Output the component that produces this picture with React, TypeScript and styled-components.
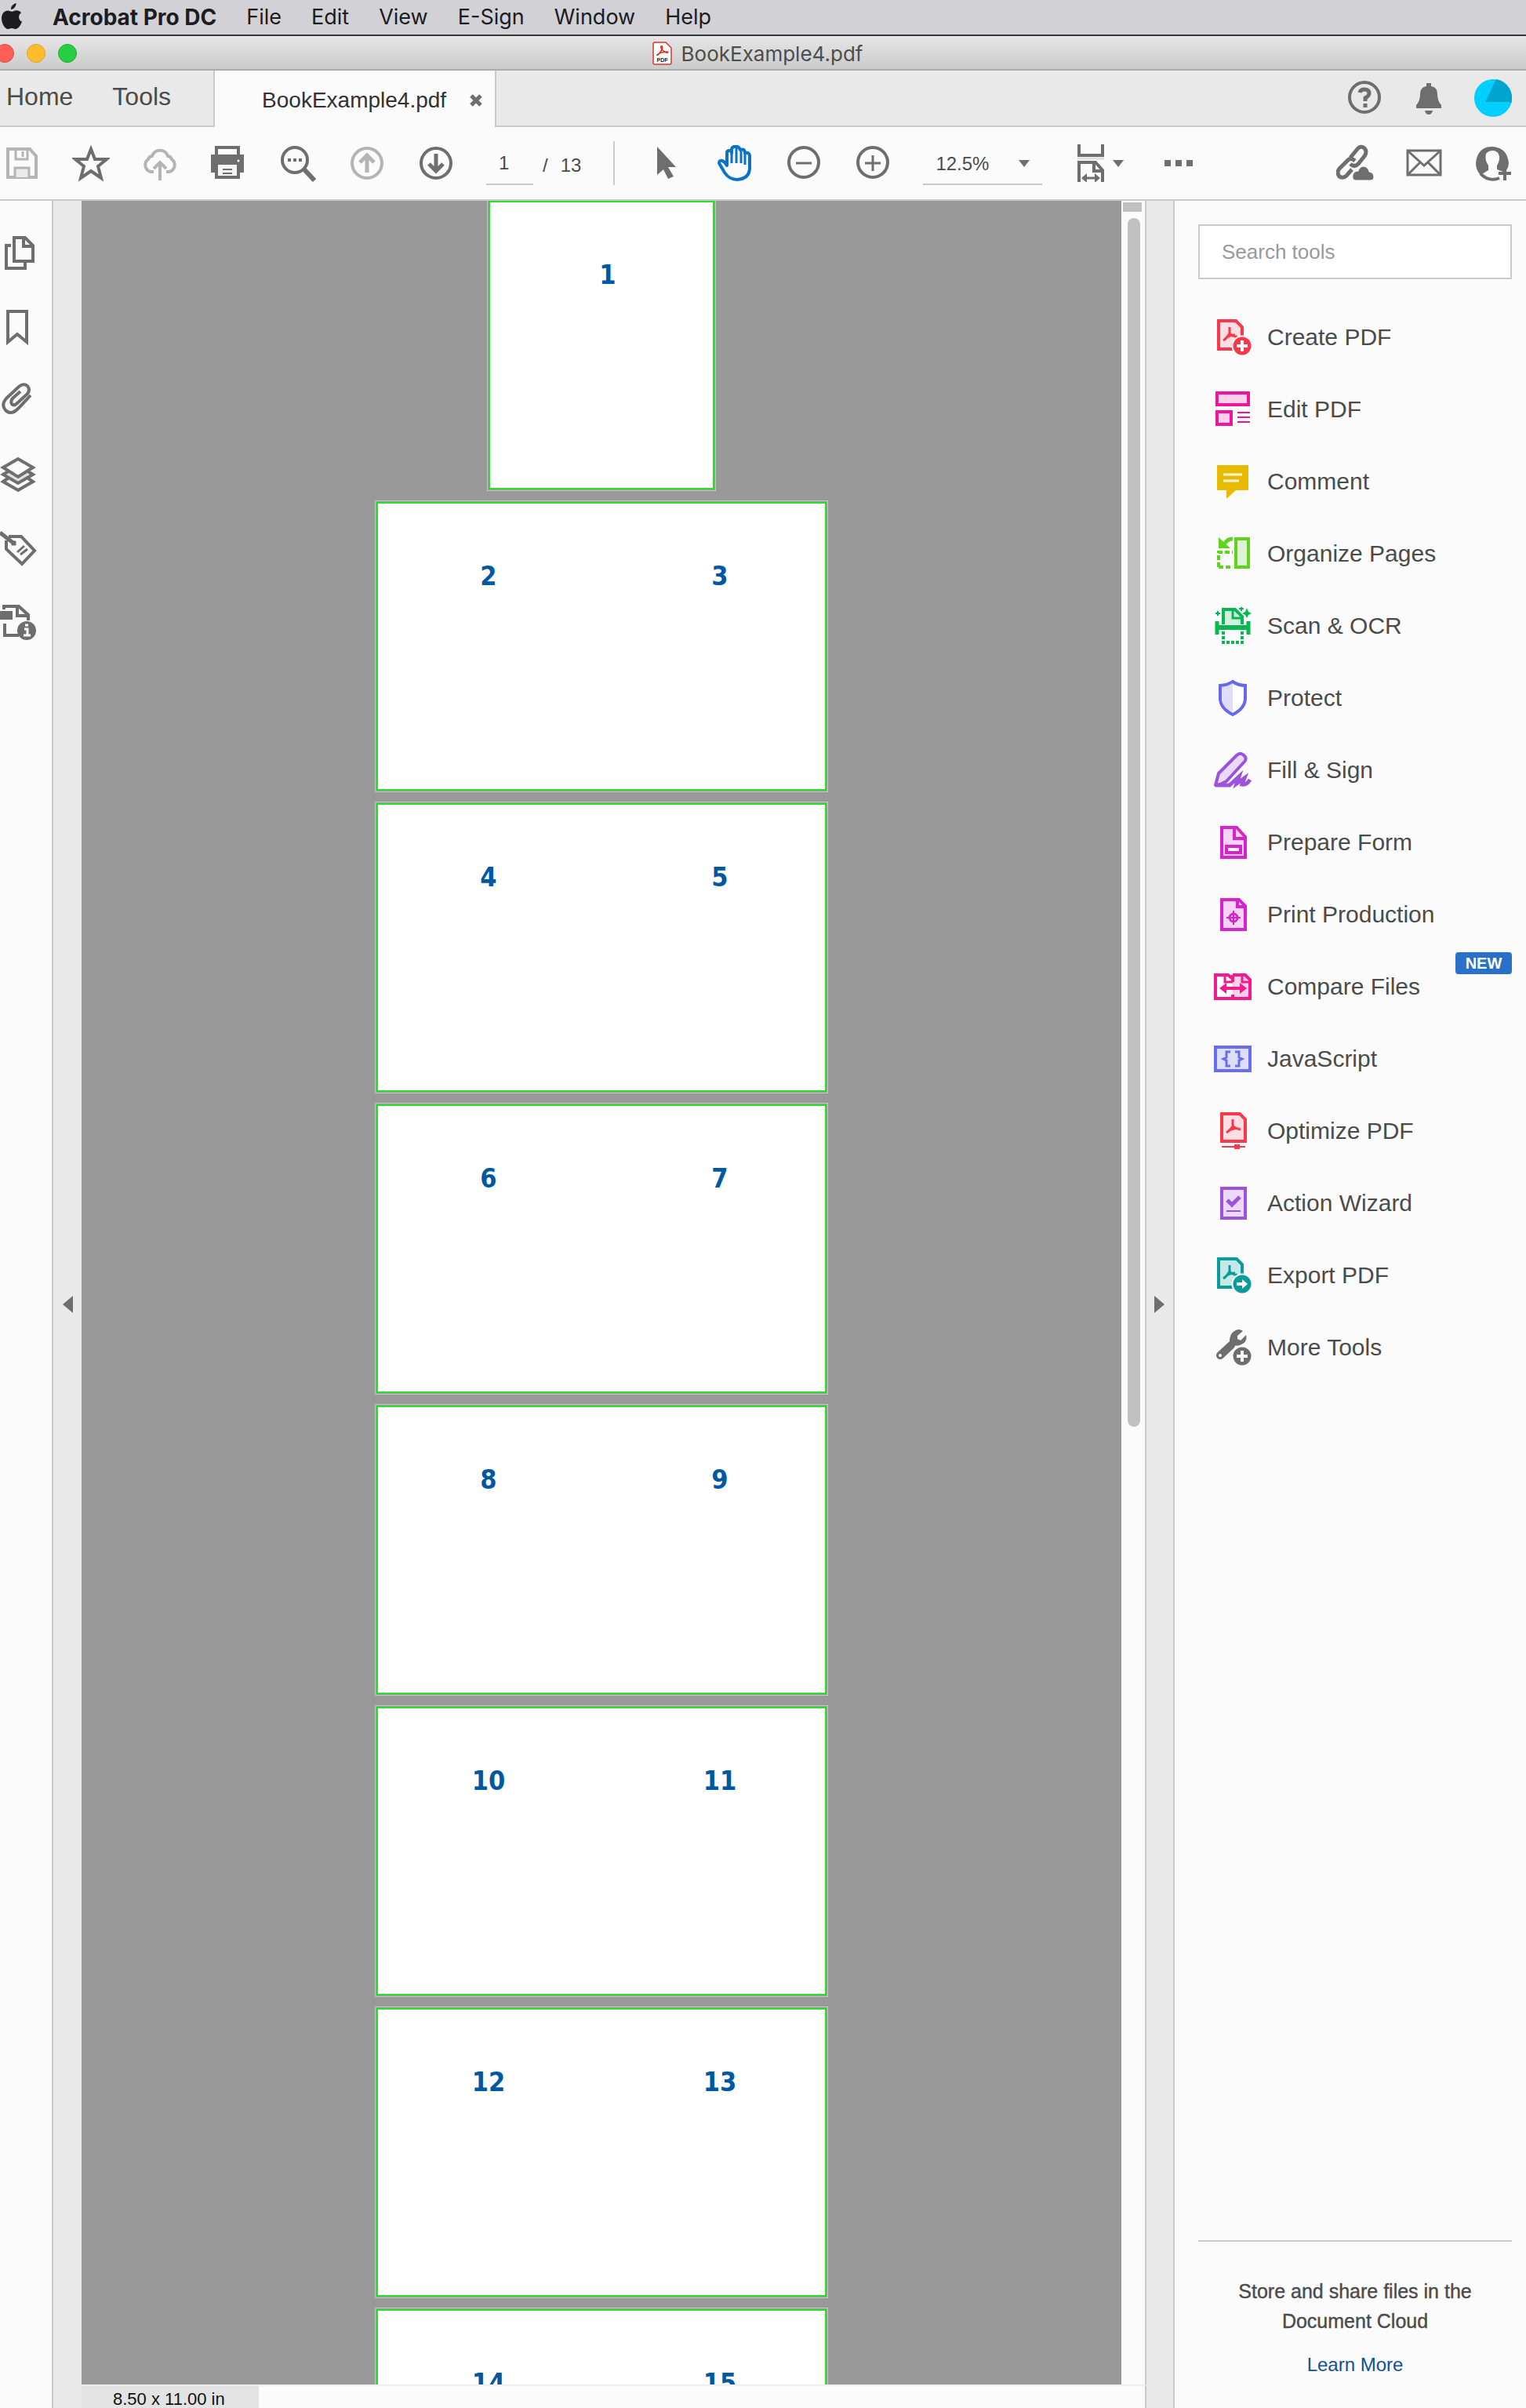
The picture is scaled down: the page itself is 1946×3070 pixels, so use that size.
import React from "react";
import styled, { createGlobalStyle } from "styled-components";

const ink = "#6e6e6e";
const pale = "#b4b4b4";
const line = "#cacaca";
const panel = "#fbfbfb";
const strip = "#e9e9e9";

const GlobalStyle = createGlobalStyle`
  * { box-sizing: border-box; }
  body { margin: 0; background: ${panel}; }
  button, input, select { font: inherit; color: inherit; border: 0; padding: 0; background: none; border-radius: 0; }
  svg { display: block; flex: none; }
`;

const Shell = styled.div`
  display: flex;
  flex-direction: column;
  height: 100vh;
  overflow: hidden;
  background: ${panel};
  color: #4b4b4b;
  font-family: "Liberation Sans", Arial, sans-serif;
`;

const MenuBar = styled.nav`
  display: flex;
  align-items: center;
  flex: none;
  height: 46px;
  gap: 38px;
  background: #d2d1d6;
  border-bottom: 2px solid #36363c;
  color: #1d1c21;
  font-family: Inter, Roboto, sans-serif;
`;

const MenuItem = styled.button<{ $bold?: boolean }>`
  font-size: ${(p) => (p.$bold ? 28 : 27)}px;
  line-height: 32px;
  font-weight: ${(p) => (p.$bold ? 700 : 400)};
  white-space: nowrap;
`;

const TitleBar = styled.header`
  position: relative;
  display: flex;
  align-items: center;
  justify-content: center;
  flex: none;
  height: 44px;
  gap: 12px;
  padding: 2px 14px 0 0;
  background: linear-gradient(#e6e6e6, #cbcbcb);
  border-bottom: 2px solid #acacac;
  color: #4d4d4d;
  font-family: Inter, Roboto, sans-serif;
  font-size: 26px;
`;

const Lights = styled.div`
  position: absolute;
  left: -6px;
  top: 10px;
  display: flex;
  gap: 16px;
`;

const Light = styled.button<{ $fill: string; $edge: string }>`
  width: 24px;
  height: 24px;
  border-radius: 50%;
  background: ${(p) => p.$fill};
  border: 1px solid ${(p) => p.$edge};
`;

const TabBar = styled.div`
  display: flex;
  flex: none;
  height: 72px;
  background: ${strip};
`;

const TabGroup = styled.div`
  display: flex;
  align-items: center;
  gap: 50px;
  padding: 0 54px 4px 8px;
  border-bottom: 2px solid ${line};
`;

const TabButton = styled.button`
  font-size: 32px;
  line-height: 40px;
`;

const ActiveTab = styled.div`
  display: flex;
  align-items: center;
  gap: 30px;
  padding: 6px 16px 2px 60px;
  background: ${panel};
  border: solid ${line};
  border-width: 0 2px;
  color: #323232;
  font-size: 28px;
`;

const TabActions = styled.div`
  display: flex;
  flex: 1;
  align-items: center;
  justify-content: flex-end;
  gap: 26px;
  padding-right: 14px;
  border-bottom: 2px solid ${line};
`;

const Toolbar = styled.div`
  display: flex;
  align-items: center;
  flex: none;
  height: 94px;
  padding-right: 14px;
  border-bottom: 2px solid ${line};
  font-size: 24px;
`;

const ToolGroup = styled.div<{ $end?: boolean }>`
  display: flex;
  align-items: center;
  gap: 32px;
  margin-left: ${(p) => (p.$end ? "auto" : "0")};
`;

const IconButton = styled.button`
  display: flex;
  align-items: center;
  justify-content: center;
  width: 56px;
  height: 56px;
`;

const PageInput = styled.input`
  width: 60px;
  height: 56px;
  margin: 0 12px 0 36px;
  padding: 2px 0 0 16px;
  border-bottom: 2px solid ${line};
`;

const PageTotal = styled.span`
  display: flex;
  gap: 16px;
  padding-top: 6px;
`;

const Divider = styled.span`
  width: 2px;
  height: 56px;
  margin: 0 38px 0 41px;
  background: ${line};
`;

const ZoomField = styled.div`
  position: relative;
  width: 152px;
  height: 56px;
  margin: 0 44px 0 35px;

  select {
    appearance: none;
    width: 100%;
    height: 100%;
    padding: 2px 0 0 16px;
    border-bottom: 2px solid ${line};
  }
  svg {
    position: absolute;
    right: 16px;
    top: 24px;
    pointer-events: none;
  }
`;

const FitButton = styled.button`
  display: flex;
  align-items: center;
  gap: 10px;
  height: 56px;
  margin-right: 42px;
`;

const Workspace = styled.div`
  display: flex;
  flex: 1;
  min-height: 0;
`;

const Rail = styled.nav`
  display: flex;
  flex-direction: column;
  flex: none;
  width: 68px;
  padding-top: 20px;
  border-right: 2px solid ${line};
`;

const RailButton = styled.button`
  display: flex;
  align-items: center;
  width: 48px;
  height: 94px;
`;

const Handle = styled.button<{ $side: "left" | "right" }>`
  display: flex;
  align-items: center;
  justify-content: center;
  flex: none;
  width: 36px;
  background: ${strip};
  border-right: ${(p) => (p.$side === "left" ? 0 : 2)}px solid ${line};
`;

const Viewer = styled.main`
  display: flex;
  flex-direction: column;
  flex: 1;
  min-width: 0;
`;

const ViewerBody = styled.div`
  display: flex;
  flex: 1;
  min-height: 0;
`;

const Canvas = styled.div`
  flex: 1;
  min-width: 0;
  overflow: hidden;
  background: #999999;
`;

const SpreadList = styled.div`
  display: flex;
  flex-direction: column;
  align-items: center;
  gap: 12px;
  margin-top: -2px;
`;

const Spread = styled.section`
  display: flex;
  padding: 1px;
  border: 1px solid #c6c6c6;
`;

const Sheet = styled.div`
  display: flex;
  height: 368px;
  background: #ffffff;
  border: 2px solid #2ae02a;
`;

const Page = styled.div<{ $odd: boolean }>`
  width: ${(p) => (p.$odd ? 284 : 286)}px;
  padding: ${(p) => (p.$odd ? "72px 0 0 16px" : "72px 4px 0 0")};
  color: #0058a3;
  font: bold 34px/40px "DejaVu Sans Condensed", "DejaVu Sans", sans-serif;
  text-align: center;
`;

const ScrollTrack = styled.div`
  display: flex;
  flex-direction: column;
  flex: none;
  width: 32px;
  padding: 2px 4px 0 2px;
  background: ${panel};
  border-right: 2px solid ${line};
`;

const ScrollSplit = styled.div`
  flex: none;
  height: 12px;
  margin-bottom: 8px;
  background: #c1c1c1;
`;

const ScrollThumb = styled.div`
  flex: 1541;
  width: 16px;
  margin-left: 6px;
  border-radius: 8px;
  background: #c1c1c1;
`;

const ScrollRest = styled.div`
  flex: 1221;
`;

const StatusBar = styled.footer`
  display: flex;
  flex: none;
  height: 30px;
  border-top: 2px solid #eeeeee;
  border-right: 2px solid ${line};
`;

const PageSize = styled.output`
  width: 226px;
  padding-left: 40px;
  background: #e3e3e3;
  color: #111111;
  font-size: 22px;
  line-height: 34px;
`;

const ToolsPanel = styled.aside`
  display: flex;
  flex-direction: column;
  flex: none;
  width: 448px;
  padding: 30px 18px 0 30px;
`;

const Search = styled.input`
  height: 70px;
  margin-bottom: 28px;
  padding-left: 28px;
  background: #ffffff;
  border: 2px solid ${line};
  font-size: 26px;

  &::placeholder { color: #999999; opacity: 1; }
`;

const ToolItem = styled.button`
  position: relative;
  display: flex;
  align-items: center;
  gap: 20px;
  height: 92px;
  padding-left: 20px;
  font-size: 30px;
  text-align: left;
`;

const NewBadge = styled.span`
  position: absolute;
  right: 0;
  top: 2px;
  width: 72px;
  border-radius: 4px;
  background: #2870c8;
  color: #ffffff;
  font-size: 20px;
  font-weight: 700;
  line-height: 28px;
  text-align: center;
`;

const Promo = styled.div`
  margin-top: auto;
  padding: 44px 0 36px;
  border-top: 2px solid ${line};
  font-size: 24px;
  line-height: 38px;
  text-align: center;

  p { margin: 0 32px 18px; font-size: 25px; -webkit-text-stroke: 0.4px #4b4b4b; }
  a { color: #0d5299; text-decoration: none; }
`;

type IconProps = { color?: string; w?: number; children: React.ReactNode };

const Icon = ({ color = ink, w = 4, children }: IconProps) => (
  <svg width="48" height="48" viewBox="0 0 48 48" fill="none" stroke={color} strokeWidth={w} aria-hidden="true">
    {children}
  </svg>
);

const Caret = () => (
  <svg width="14" height="9" viewBox="0 0 14 9" aria-hidden="true">
    <path d="M0 0H14L7 9Z" fill={ink} />
  </svg>
);

const AppleLogo = () => (
  <svg width="29" height="36" viewBox="0 0 29 36" fill="#1d1c21" aria-hidden="true">
    <path d="M20.600 0C20.900 3.500 17.700 8 14 8C13.600 4.500 17 .7 20.600 0ZM27 12.200C23 14.800 23 21.400 28 23.600C26.500 28.500 23 33 20 33C18 33 17.200 31.900 15 31.900C12.700 31.900 11.700 33 10 33C6.500 33 2 26 2 19.500C2 13 6 9.500 10 9.500C12.200 9.500 13.800 10.800 15.200 10.800C16.600 10.800 18.500 9.300 21 9.300C23.500 9.300 25.600 10.300 27 12.200Z" />
  </svg>
);

const PdfBadge = () => (
  <svg width="25" height="30" viewBox="0 0 25 30" aria-hidden="true">
    <path d="M3 1H17L24 8V27Q24 29 22 29H3Q1 29 1 27V3Q1 1 3 1Z" fill="#fff" stroke="#d8392f" strokeWidth="1.500" />
    <path d="M11 6C14 5 13 11 8 16C4 20 5 14 18 13C22 13 19 16 14 12C11 9 10 7 11 6Z" fill="none" stroke="#e0291d" strokeWidth="1.600" />
    <text x="12.500" y="26" fontSize="7" fontWeight="700" fontFamily="Liberation Sans" textAnchor="middle" fill="#222">PDF</text>
  </svg>
);

const CloseIcon = () => (
  <svg width="16" height="16" viewBox="0 0 16 16" aria-hidden="true">
    <path d="M2 2L14 14M14 2L2 14" stroke={ink} strokeWidth="5" />
  </svg>
);

const SaveIcon = () => (
  <Icon color={pale}>
    <path d="M6 6H34L42 15V42H6Z" />
    <path d="M16 6V19H31V6M25 9V16" strokeWidth="3" />
    <path d="M15 42V30H33V42" fill="#ebebeb" strokeWidth="3" />
  </Icon>
);

const StarIcon = () => (
  <Icon>
    <path d="M24 6L29 19H44L33 28L37 43L24 34L11 43L15 28L4 19H19Z" />
  </Icon>
);

const CloudIcon = () => (
  <Icon color={pale}>
    <path d="M16 35H12A9 9 0 0 1 9 19A6 6 0 0 1 14 15A10.500 10.500 0 0 1 34 15A6 6 0 0 1 39 19A9 9 0 0 1 36 35H32" strokeWidth="4" />
    <path d="M24 46V24M16 31L24 23L32 31" strokeWidth="4" />
  </Icon>
);

const PrintIcon = () => (
  <Icon>
    <path d="M8 16V4H36V16" />
    <path d="M3 15H41V34H35V24H9V34H3Z" fill={ink} />
    <path d="M8 26V42H36V26" fill="#f4f4f4" />
    <path d="M16 32H28M16 37H28" strokeWidth="2" />
    <circle cx="36" cy="21" r="1.500" fill="#fff" stroke="none" />
  </Icon>
);

const FindIcon = () => (
  <Icon>
    <circle cx="20" cy="20" r="16" />
    <path d="M31 31L45 46" strokeWidth="6" />
    <path d="M11 20H15M18 20H22M25 20H29" />
  </Icon>
);

const ArrowCircle = ({ up }: { up?: boolean }) => (
  <Icon color={up ? pale : ink}>
    <circle cx="24" cy="24" r="19" />
    {up ? <path d="M24 36V14M15 23L24 14L33 23" strokeWidth="5" /> : <path d="M24 12V34M15 25L24 34L33 25" strokeWidth="5" />}
  </Icon>
);

const PointerIcon = () => (
  <Icon>
    <path d="M12 3L36 29H26L33 41L26 44L20 32L12 39Z" fill={ink} stroke="none" />
  </Icon>
);

const HandIcon = () => (
  <Icon color="#0a73c8">
    <path d="M13 27V11Q13 8 16 8T19 11V7Q19 4 22 3H26Q29 4 30 7Q36 5 36 11Q42 10 42 15V31Q41 44 26 45Q16 45 10 36L3 24Q3 20 7 21Q10 22 13 27Z" strokeLinejoin="round" />
    <path d="M19 10V24M25 5V24M31 8V24M36 11V26" strokeWidth="3" />
  </Icon>
);

const ZoomCircle = ({ plus }: { plus?: boolean }) => (
  <Icon>
    <circle cx="23" cy="23" r="19" />
    <path d={plus ? "M13 24H33M23 14V34" : "M13 24H33"} strokeWidth="3" />
  </Icon>
);

const FitIcon = () => (
  <svg width="36" height="48" viewBox="0 0 36 48" fill="none" stroke={ink} strokeWidth="4" aria-hidden="true">
    <path d="M3 0V14H33V0" />
    <path d="M1 18H35" stroke="#e0e0e0" strokeWidth="3" />
    <path d="M3 48V23H24L33 33V48M22 23V34H33" />
    <path d="M9 43H27" strokeWidth="3" />
    <path d="M13 37L6 43L13 49ZM23 37L30 43L23 49Z" fill={ink} stroke="none" />
  </svg>
);

const DotsIcon = () => (
  <Icon>
    <path d="M6 24H14M20 24H28M34 24H42" strokeWidth="8" />
  </Icon>
);

const HelpIcon = () => (
  <Icon>
    <circle cx="24" cy="23" r="19" />
    <path d="M18 17Q19 13 24 13Q30 13 30 18Q30 21 25 24V28M25 31V36" strokeWidth="5" />
  </Icon>
);

const BellIcon = () => (
  <Icon>
    <path d="M21 5H27V9Q35 10 35 19Q35 28 40 33V37H8V33Q13 28 13 19Q13 10 21 9ZM19 40H29Q28 45 24 45T19 40Z" fill={ink} stroke="none" />
  </Icon>
);

const Avatar = () => (
  <Icon>
    <circle cx="24" cy="24" r="24" fill="#00cfff" stroke="none" />
    <path d="M28 0A24 24 0 0 1 47 31L45 29H14Z" fill="#00a5cf" stroke="none" />
  </Icon>
);

const LinkIcon = () => (
  <Icon w={5}>
    <path d="M18 17L27 6Q31 1 36 5Q40 9 36 15L28 25Q23 30 18 25" />
    <path d="M24 21Q18 16 14 21L4 31Q0 36 4 41Q9 44 13 40L20 32" />
    <path d="M24 46Q20 45 21 39Q23 34 28 34Q30 28 35 28Q41 29 42 35Q48 36 48 42Q48 46 44 46Z" fill={ink} stroke={panel} strokeWidth="1" />
  </Icon>
);

const MailIcon = () => (
  <Icon w={3}>
    <path d="M3 8H45V39H3Z" />
    <path d="M4 9L24 27L44 9M4 38L19 23M44 38L29 23" />
  </Icon>
);

const PersonIcon = () => (
  <Icon>
    <path d="M32 43A20 20 0 0 1 8 37" />
    <path d="M8 39Q2 33 2 24Q4 3 23 3Q42 4 44 24Q44 29 41 33L37 35L29 32V27Q34 19 31 12Q28 8 24 8Q18 8 15 12Q13 20 18 27V33Z" fill={ink} stroke="none" />
    <path d="M31 37H47M39 29V46" />
  </Icon>
);

const railIcons: [string, React.ReactNode][] = [
  ["Page thumbnails", <Icon><path d="M14 14H8V43H32V36" /><path d="M18 4H32L42 14V34H18Z" fill={panel} /><path d="M30 4V15H42" /></Icon>],
  ["Bookmarks", <Icon><path d="M10 4H34V43L22 33L10 43Z" /></Icon>],
  ["Attachments", <Icon><path d="M39 17L23 34Q14 43 7 36Q1 29 8 21L24 6Q30 1 35 5Q39 10 35 15L22 27Q18 31 15 28Q13 24 17 20L26 12" /></Icon>],
  ["Layers", <Icon><path d="M4 33L23 20L42 33L23 44Z" fill={panel} /><path d="M4 24L23 12L42 24L23 35Z" fill="#e0e0e0" /><path d="M4 15L23 4L42 15L23 27Z" fill={panel} /></Icon>],
  ["Tags", <Icon><path d="M11 9H27L44 27L28 44L8 25V14" /><path d="M0 4L18 18" strokeWidth="5" /><path d="M15 15H20V20H15Z" fill={ink} strokeWidth="1" /><path d="M22 29L31 21M26 32L35 25" strokeWidth="3" /></Icon>],
  ["Document info", <Icon><path d="M5 8V4H24L36 15V22M22 4V16H34" /><path d="M0 10H16V21H0Z" fill={ink} stroke="none" /><path d="M6 26V41H24" /><circle cx="34" cy="35" r="12" fill={ink} stroke="none" /><path d="M31 33H35V41M30 41H39M32 28H36" stroke="#fff" strokeWidth="3" /></Icon>],
];

const acro = "M20 11V19Q17 25 12 28M20 19Q25 24 30 23M16 24Q21 21 27 21";

const tools: [string, React.ReactNode][] = [
  ["Create PDF", <Icon color="#f9384b"><path d="M6 3H28L36 11V39H6Z" fill="#fddfe3" /><path d={acro} strokeWidth="3" /><circle cx="36" cy="35" r="12.500" fill="#f9384b" stroke={panel} strokeWidth="2" /><path d="M29 35H43M36 28V42" stroke="#fff" /></Icon>],
  ["Edit PDF", <Icon color="#f0149a"><path d="M4 3H44V18H4ZM4 27H22V43H4Z" fill="#fcd0ea" /><path d="M30 28H46M30 34H46M30 40H46" strokeWidth="2" /></Icon>],
  ["Comment", <Icon><path d="M5 3H43Q44 3 44 4V34Q44 35 43 35H28L16 46V35H5Q4 35 4 34V4Q4 3 5 3Z" fill="#e8bb00" stroke="none" /><path d="M12 15H36M12 23H32" stroke="#fdf6d8" strokeWidth="3" /></Icon>],
  ["Organize Pages", <Icon color="#5fd41d"><path d="M28 5H44V41H28Z" fill="#e0f3d6" /><path d="M6 41V22H24M6 41H24" strokeDasharray="6 3" /><path d="M24 5Q17 5 14 11" strokeWidth="5" /><path d="M6 3V17H21Z" fill="#5fd41d" stroke="none" /></Icon>],
  ["Scan & OCR", <Icon color="#05b84f"><path d="M12 22V3H27L36 12V22" fill="#d3f0de" /><path d="M24 3V14H36" strokeWidth="3" /><path d="M4 18V35M44 18V35" strokeWidth="5" /><path d="M2 26H46" strokeWidth="6" /><path d="M12 31V45H36V31" strokeDasharray="4 2" /><path d="M5 5V11M2 8H8M35 0V5M32 2H38" strokeWidth="2" /><path d="M42 1L44 6L48 8L44 10L42 14L40 10L36 8L40 6Z" fill="#05b84f" stroke="none" /></Icon>],
  ["Protect", <Icon color="#6767f0"><path d="M24 3Q31 8 40 8V24Q40 37 24 45Q8 37 8 24V8Q17 8 24 3Z" fill="#fff" /><path d="M24 5V42Q10 35 10 24V10Q18 9 24 5Z" fill="#dedefa" stroke="none" /></Icon>],
  ["Fill & Sign", <Icon color="#9d52dd"><path d="M6 28L29 5Q33 1 37 4Q43 8 39 13L16 38L8 42L2 43Z" fill="#ead9f8" strokeLinejoin="round" /><path d="M2 43H20L32 32L29 41L39 34L36 42Q42 43 46 36" strokeWidth="5" /></Icon>],
  ["Prepare Form", <Icon color="#d722d0"><path d="M10 5H29L40 17V43H10Z" fill="#f7d3f5" /><path d="M26 5V19H40" /><path d="M16 29H34V37H16Z" fill="#fff" /></Icon>],
  ["Print Production", <Icon color="#d722d0"><path d="M10 5H32L40 13V43H10Z" fill="#f7d3f5" /><path d="M30 5V14H40" /><circle cx="25" cy="28" r="5" strokeWidth="3" /><path d="M25 19V37M16 28H34" strokeWidth="2" /></Icon>],
  ["Compare Files", <Icon color="#f5188f"><path d="M24 14L18 9H2V39H24" fill="#fff" /><path d="M24 9H40L46 15V39H24" fill="#fcd0e8" /><path d="M24 9V18M24 34V39" /><path d="M14 9V18H24M36 9V18H46" strokeWidth="3" /><path d="M12 26H38" /><path d="M16 19L7 26L16 33ZM33 19L42 26L33 33Z" fill="#f5188f" stroke="none" /></Icon>],
  ["JavaScript", <Icon color="#686df2"><path d="M2 9H46V39H2Z" fill="#dedffc" /><path d="M21 15H16V22L12 24L16 26V33H21M27 15H32V22L36 24L32 26V33H27" strokeWidth="3" /></Icon>],
  ["Optimize PDF", <Icon color="#f9384b"><path d="M10 2H33L40 9V37H10Z" fill="#fddfe3" /><path d="M24 9V18Q21 23 16 26M24 18Q28 21 34 22M19 23L28 20" strokeWidth="3" /><path d="M10 44H40" strokeWidth="2" /><path d="M26 44H33" strokeWidth="6" /></Icon>],
  ["Action Wizard", <Icon color="#9d52dd"><path d="M10 5H40V43H10Z" fill="#ead9f8" /><path d="M17 20L23 26L33 16" strokeWidth="5" /><path d="M16 34H34" strokeWidth="2" /></Icon>],
  ["Export PDF", <Icon color="#0a9c9a"><path d="M6 3H29L36 10V39H6Z" fill="#c5e9e9" /><path d={acro} strokeWidth="3" /><circle cx="36" cy="35" r="12.500" fill="#0a9c9a" stroke={panel} strokeWidth="2" /><path d="M29 35H40" stroke="#fff" /><path d="M36 29L43 35L36 41Z" fill="#fff" stroke="none" /></Icon>],
  ["More Tools", <Icon><path d="M22 21L8 34" strokeWidth="10" strokeLinecap="round" /><path d="M20 20Q19 7 26 3Q32 -1 37 3L30 9V13L34 15L41 8Q43 17 35 20Q31 23 25 21Z" fill={ink} stroke="none" /><circle cx="8" cy="34" r="2" fill="#fff" stroke="none" /><circle cx="36" cy="35" r="12.500" fill={ink} stroke={panel} strokeWidth="2" /><path d="M29 35H43M36 28V42" stroke="#fff" /></Icon>],
];

const spreads = [[1], [2, 3], [4, 5], [6, 7], [8, 9], [10, 11], [12, 13], [14, 15]];

export default function App() {
  return (
    <Shell>
      <GlobalStyle />
      <MenuBar>
        <AppleLogo />
        <MenuItem $bold>Acrobat Pro DC</MenuItem>
        {["File", "Edit", "View", "E-Sign", "Window", "Help"].map((name) => (
          <MenuItem key={name}>{name}</MenuItem>
        ))}
      </MenuBar>

      <TitleBar>
        <Lights>
          <Light $fill="#ff5f58" $edge="#e14840" aria-label="Close window" />
          <Light $fill="#ffbd2e" $edge="#dea032" aria-label="Minimize window" />
          <Light $fill="#28cd41" $edge="#1dad2c" aria-label="Zoom window" />
        </Lights>
        <PdfBadge />
        <span>BookExample4.pdf</span>
      </TitleBar>

      <TabBar>
        <TabGroup>
          <TabButton>Home</TabButton>
          <TabButton>Tools</TabButton>
        </TabGroup>
        <ActiveTab>
          <span>BookExample4.pdf</span>
          <button aria-label="Close tab"><CloseIcon /></button>
        </ActiveTab>
        <TabActions>
          <IconButton aria-label="Help"><HelpIcon /></IconButton>
          <IconButton aria-label="Notifications"><BellIcon /></IconButton>
          <IconButton aria-label="Account"><Avatar /></IconButton>
        </TabActions>
      </TabBar>

      <Toolbar>
        <ToolGroup>
          <IconButton aria-label="Save"><SaveIcon /></IconButton>
          <IconButton aria-label="Star"><StarIcon /></IconButton>
          <IconButton aria-label="Upload"><CloudIcon /></IconButton>
          <IconButton aria-label="Print"><PrintIcon /></IconButton>
          <IconButton aria-label="Find"><FindIcon /></IconButton>
          <IconButton aria-label="Previous page"><ArrowCircle up /></IconButton>
          <IconButton aria-label="Next page"><ArrowCircle /></IconButton>
        </ToolGroup>
        <PageInput aria-label="Page number" defaultValue="1" />
        <PageTotal><span>/</span><span>13</span></PageTotal>
        <Divider />
        <ToolGroup>
          <IconButton aria-label="Select"><PointerIcon /></IconButton>
          <IconButton aria-label="Hand"><HandIcon /></IconButton>
          <IconButton aria-label="Zoom out"><ZoomCircle /></IconButton>
          <IconButton aria-label="Zoom in"><ZoomCircle plus /></IconButton>
        </ToolGroup>
        <ZoomField>
          <select aria-label="Zoom level" defaultValue="12.5%"><option>12.5%</option></select>
          <Caret />
        </ZoomField>
        <FitButton aria-label="Page fit"><FitIcon /><Caret /></FitButton>
        <IconButton aria-label="More"><DotsIcon /></IconButton>
        <ToolGroup $end>
          <IconButton aria-label="Share link"><LinkIcon /></IconButton>
          <IconButton aria-label="Send by mail"><MailIcon /></IconButton>
          <IconButton aria-label="Invite people"><PersonIcon /></IconButton>
        </ToolGroup>
      </Toolbar>

      <Workspace>
        <Rail>
          {railIcons.map(([label, icon]) => (
            <RailButton key={label} aria-label={label}>{icon}</RailButton>
          ))}
        </Rail>
        <Handle $side="left" aria-label="Open navigation pane">
          <svg width="14" height="22" viewBox="0 0 14 22"><path d="M14 0V22L1 11Z" fill={ink} /></svg>
        </Handle>
        <Viewer>
          <ViewerBody>
            <Canvas>
              <SpreadList>
                {spreads.map((pages) => (
                  <Spread key={pages[0]}>
                    <Sheet>
                      {pages.map((n) => (
                        <Page key={n} $odd={n % 2 === 1}>{n}</Page>
                      ))}
                    </Sheet>
                  </Spread>
                ))}
              </SpreadList>
            </Canvas>
            <ScrollTrack>
              <ScrollSplit />
              <ScrollThumb />
              <ScrollRest />
            </ScrollTrack>
          </ViewerBody>
          <StatusBar>
            <PageSize>8.50 x 11.00 in</PageSize>
          </StatusBar>
        </Viewer>
        <Handle $side="right" aria-label="Close tools pane">
          <svg width="14" height="22" viewBox="0 0 14 22"><path d="M0 0V22L13 11Z" fill={ink} /></svg>
        </Handle>
        <ToolsPanel>
          <Search type="search" aria-label="Search tools" placeholder="Search tools" />
          {tools.map(([name, icon]) => (
            <ToolItem key={name}>
              {icon}
              <span>{name}</span>
              {name === "Compare Files" && <NewBadge>NEW</NewBadge>}
            </ToolItem>
          ))}
          <Promo>
            <p>Store and share files in the Document Cloud</p>
            <a href="#learn-more">Learn More</a>
          </Promo>
        </ToolsPanel>
      </Workspace>
    </Shell>
  );
}
